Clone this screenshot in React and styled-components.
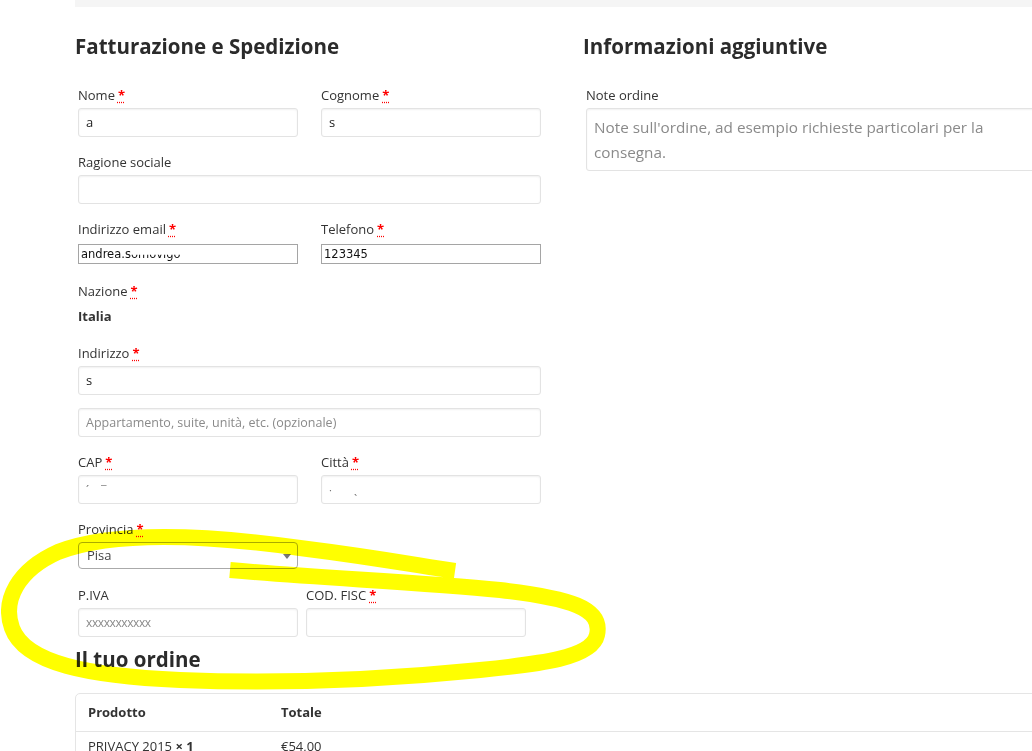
import React from 'react'
import styled, { createGlobalStyle } from 'styled-components'

const GlobalStyle = createGlobalStyle`
    html, body {
        margin: 0;
        padding: 0;
        background: #fff;
        overflow: hidden;
    }
    body {
        font-family: "Open Sans", "Noto Sans", sans-serif;
        color: #333;
    }
`;

const Page = styled.div`
    position: relative;
    width: 1032px;
    height: 751px;
    overflow: hidden;
    background: #fff;
`;

const Wrap = styled.div`
    margin-left: 75px;
    width: 978px;
`;

const NoticeBar = styled.div`
    height: 7px;
    background: #f5f5f5;
`;

const Columns = styled.div`
    display: grid;
    grid-template-columns: 470px 470px;
    column-gap: 38px;
`;

const Heading = styled.h3`
    margin: ${p => p.$top || 25}px 0 ${p => p.$bottom || 25}px;
    font-size: 20.5px;
    line-height: 28px;
    font-weight: 700;
    color: #2b2b2b;
`;

const Fields = styled.div`
    padding-left: 3px;
    width: 463px;
`;

const Row = styled.div`
    display: grid;
    grid-template-columns: 220px 220px;
    column-gap: ${p => p.$gap ?? 23}px;
`;

const Field = styled.div`
    display: flex;
    flex-direction: column;
    margin-bottom: ${p => p.$mb ?? 15}px;
`;

const Label = styled.label`
    display: block;
    font-size: 13px;
    line-height: 20px;
    color: #333;
    margin-bottom: ${p => p.$gap ?? 3}px;
`;

const Req = styled.abbr`
    color: red;
    font-weight: 700;
    text-decoration: underline dotted red;
    text-underline-offset: 2px;
    margin-left: 3px;
    cursor: help;
`;

const Input = styled.div`
    box-sizing: border-box;
    height: 29px;
    border: 1px solid #e3e3e3;
    border-radius: 3px;
    box-shadow: inset 0 1px 2px rgba(0, 0, 0, 0.06);
    background: #fff;
    padding: 0 7px;
    font-size: 13px;
    line-height: 27px;
    color: #222;
    margin-top: ${p => p.$mt || 0}px;
    white-space: nowrap;
    overflow: hidden;
`;

const Placeholder = styled.span`
    color: #8a8a8a;
    font-size: ${p => p.$size || 12.5}px;
    letter-spacing: ${p => p.$ls || 0}px;
`;

const PlainInput = styled.div`
    box-sizing: border-box;
    height: 20px;
    margin-top: 2px;
    border: 1px solid #a5a5a5;
    background: #fff;
    padding: 0 2px;
    font-family: "DejaVu Sans", Verdana, sans-serif;
    font-size: 11.5px;
    line-height: 18px;
    color: #111;
    white-space: nowrap;
    overflow: hidden;
`;

const Clipped = styled.span`
    clip-path: inset(55% 0 0 0);
`;

const Speck = styled.span`
    color: #777;
    font-size: 11px;
    margin-right: ${p => p.$mr || 0}px;
`;

const StaticValue = styled.div`
    font-size: 13px;
    line-height: 20px;
    font-weight: 700;
    color: #333;
    margin-top: 5px;
`;

const Select = styled.div`
    position: relative;
    box-sizing: border-box;
    height: 27px;
    border: 1px solid #aaa;
    border-radius: 4px;
    background: #fff;
    padding: 0 8px;
    font-size: 13px;
    line-height: 25px;
    color: #444;
`;

const Caret = styled.span`
    position: absolute;
    right: 6px;
    top: 11px;
    width: 0;
    height: 0;
    border-left: 4px solid transparent;
    border-right: 4px solid transparent;
    border-top: 5px solid #777;
`;

const TextArea = styled.div`
    box-sizing: border-box;
    height: 63px;
    border: 1px solid #e3e3e3;
    border-radius: 3px;
    box-shadow: inset 0 1px 2px rgba(0, 0, 0, 0.06);
    padding: 6px 7px;
    font-size: 15.3px;
    line-height: 25px;
    color: #8a8a8a;
`;

const OrderTable = styled.table`
    width: 978px;
    border: 1px solid #e5e5e5;
    border-radius: 5px;
    border-collapse: separate;
    border-spacing: 0;
    font-size: 13px;
    color: #333;
`;

const Th = styled.th`
    text-align: left;
    font-weight: 700;
    padding: 9px 12px;
    line-height: 19px;
    border-bottom: 1px solid #e5e5e5;
    width: ${p => p.$w ? `${p.$w}px` : 'auto'};
`;

const Td = styled.td`
    padding: 5px 12px;
    line-height: 19px;
`;

// highlighter stroke drawn over the screenshot
const Scribble = styled.svg`
    position: absolute;
    left: 0;
    top: 0;
    pointer-events: none;
    mix-blend-mode: multiply;
`;

const Required = () => <Req title="obbligatorio">*</Req>;

export default function App() {
    return (
        <Page>
            <GlobalStyle />
            <Wrap>
                <NoticeBar />
                <Columns>
                    <div>
                        <Heading>Fatturazione e Spedizione</Heading>
                        <Fields>
                            <Row>
                                <Field>
                                    <Label>Nome<Required /></Label>
                                    <Input>a</Input>
                                </Field>
                                <Field>
                                    <Label>Cognome<Required /></Label>
                                    <Input>s</Input>
                                </Field>
                            </Row>
                            <Field>
                                <Label>Ragione sociale</Label>
                                <Input />
                            </Field>
                            <Row>
                                <Field $mb={17}>
                                    <Label>Indirizzo email<Required /></Label>
                                    <PlainInput>andrea.s<Clipped>omovigo</Clipped></PlainInput>
                                </Field>
                                <Field $mb={17}>
                                    <Label>Telefono<Required /></Label>
                                    <PlainInput>123345</PlainInput>
                                </Field>
                            </Row>
                            <Field $mb={17}>
                                <Label $gap={0}>Nazione<Required /></Label>
                                <StaticValue>Italia</StaticValue>
                            </Field>
                            <Field>
                                <Label>Indirizzo<Required /></Label>
                                <Input>s</Input>
                                <Input $mt={13}>
                                    <Placeholder>Appartamento, suite, unità, etc. (opzionale)</Placeholder>
                                </Input>
                            </Field>
                            <Row>
                                <Field>
                                    <Label>CAP<Required /></Label>
                                    <Input><Speck $mr={12}>ˊ</Speck><Speck>¯</Speck></Input>
                                </Field>
                                <Field>
                                    <Label>Città<Required /></Label>
                                    <Input><Speck $mr={22}>·</Speck><Speck>ˎ</Speck></Input>
                                </Field>
                            </Row>
                            <Row>
                                <Field $mb={16}>
                                    <Label>Provincia<Required /></Label>
                                    <Select>Pisa<Caret /></Select>
                                </Field>
                            </Row>
                            <Row $gap={8}>
                                <Field $mb={0}>
                                    <Label>P.IVA</Label>
                                    <Input><Placeholder $size={12} $ls={-0.4}>xxxxxxxxxxx</Placeholder></Input>
                                </Field>
                                <Field $mb={0}>
                                    <Label>COD. FISC<Required /></Label>
                                    <Input />
                                </Field>
                            </Row>
                        </Fields>
                    </div>
                    <div>
                        <Heading>Informazioni aggiuntive</Heading>
                        <Fields>
                            <Field>
                                <Label>Note ordine</Label>
                                <TextArea>Note sull'ordine, ad esempio richieste particolari per la consegna.</TextArea>
                            </Field>
                        </Fields>
                    </div>
                </Columns>
                <Heading $top={8} $bottom={20}>Il tuo ordine</Heading>
                <OrderTable>
                    <thead>
                        <tr>
                            <Th $w={169}>Prodotto</Th>
                            <Th>Totale</Th>
                        </tr>
                    </thead>
                    <tbody>
                        <tr>
                            <Td>PRIVACY 2015 <strong>× 1</strong></Td>
                            <Td>€54,00</Td>
                        </tr>
                    </tbody>
                </OrderTable>
            </Wrap>
            <Scribble width="1032" height="751" viewBox="0 0 1032 751">
                <path
                    d="M 230 570 C 320 578, 420 582, 500 590 C 570 598, 603 608, 597 635 C 592 658, 540 664, 480 670 C 380 680, 280 684, 180 680 C 90 676, 25 664, 12 628 C 2 600, 18 570, 58 552 C 110 532, 200 534, 300 548 C 380 558, 420 566, 455 571"
                    fill="none"
                    stroke="#ffff00"
                    strokeWidth="16"
                    strokeLinecap="butt"
                    strokeLinejoin="round"
                />
            </Scribble>
        </Page>
    )
}
